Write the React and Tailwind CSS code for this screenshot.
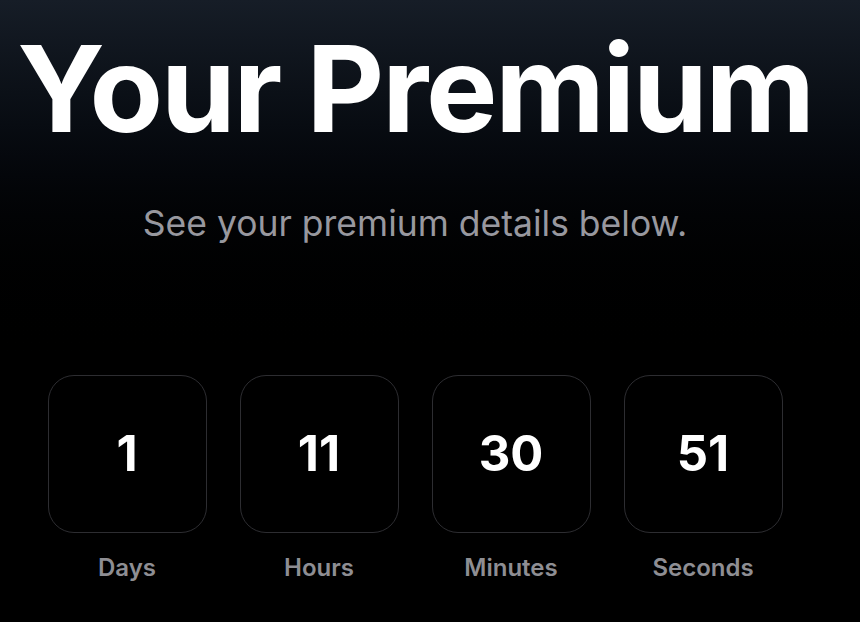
const units = [
  { value: 1, label: 'Days' },
  { value: 11, label: 'Hours' },
  { value: 30, label: 'Minutes' },
  { value: 51, label: 'Seconds' },
]

export default function App() {
  return (
    <div className="w-[860px] h-[622px] overflow-hidden bg-gradient-to-b from-[#161d27] to-black to-[60%]"
      style={{ fontFamily: 'Inter, "Noto Sans", sans-serif' }}>
      <div className="flex flex-col items-center pr-[30px]">

        {/* Heading */}
        <h1 className="pt-[29px] text-[120px] leading-none font-bold tracking-[-0.018em] text-white">
          Your Premium
        </h1>
        <p className="mt-[57px] text-[35.5px] leading-none text-[#98989f]">
          See your premium details below.
        </p>

        {/* Countdown */}
        <div className="mt-[133px] flex gap-[33px]">
          {units.map(u => (
            <div key={u.label} className="flex flex-col items-center">
              <div className="w-[159px] h-[158px] rounded-[26px] border border-[#2d2d31] bg-black flex items-center justify-center">
                <span className="text-[49px] leading-none font-bold text-white">{u.value}</span>
              </div>
              <span className="mt-[23px] text-[24px] leading-none font-semibold text-[#8e8e93]">{u.label}</span>
            </div>
          ))}
        </div>
      </div>
    </div>
  )
}
